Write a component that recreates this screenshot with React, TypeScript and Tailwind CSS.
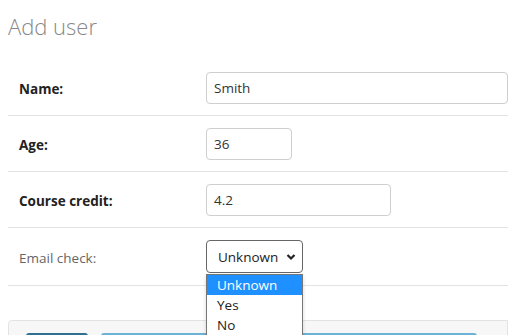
import React from "react";

const font = { fontFamily: '"Open Sans", "Noto Sans", sans-serif' };

function Row({ label, bold = true, children, last = false }: { label: string; bold?: boolean; children: React.ReactNode; last?: boolean }) {
  return (
    <div className={`flex items-center border-b border-[#e3e3e3] ${last ? "h-[58px]" : "h-[56px]"}`}>
      <div className={`w-[198px] pl-[11px] pt-[3px] text-[13.5px] ${bold ? "font-bold text-[#222]" : "text-[#666]"}`}>{label}</div>
      <div className="flex-1 relative">{children}</div>
    </div>
  );
}

function Input({ value, w }: { value: string; w: string }) {
  return (
    <div className={`${w} h-[32px] border border-[#cfcfcf] rounded-[4px] pl-[7px] pt-[2px] flex items-center text-[13.5px] text-[#333] bg-white`}>
      {value}
    </div>
  );
}

export default function App() {
  return (
    <div className="w-[508px] h-[335px] overflow-hidden bg-white pl-[8px]" style={font}>
      <div className="pt-[12px] h-[60px] text-[22px] font-light text-[#888] leading-[28px]">Add user</div>
      <Row label="Name:">
        <Input value="Smith" w="w-[302px]" />
      </Row>
      <Row label="Age:">
        <Input value="36" w="w-[86px]" />
      </Row>
      <Row label="Course credit:">
        <Input value="4.2" w="w-[185px]" />
      </Row>
      <Row label="Email check:" bold={false} last>
        <div className="w-[97px] h-[33px] border border-[#666] rounded-[4px] pl-[11px] pr-[6px] flex items-center justify-between text-[13.5px] text-[#222] bg-white">
          <span className="pt-[2px]">Unknown</span>
          <svg width="10" height="8" viewBox="0 0 10 8" className="mt-[1px]">
            <path d="M1.5 2 L5 5.5 L8.5 2" stroke="#222" strokeWidth="2.2" fill="none" />
          </svg>
        </div>
        <div className="absolute left-0 top-[33.5px] w-[97px] z-10 bg-white border border-[#767676] text-[13.5px] text-[#222] shadow-[0_2px_4px_rgba(0,0,0,0.15)]">
          <div className="h-[20px] leading-[21px] pl-[10px] bg-[#1e90ff] text-white">Unknown</div>
          <div className="h-[20px] leading-[21px] pl-[10px]">Yes</div>
          <div className="h-[20px] leading-[21px] pl-[10px]">No</div>
        </div>
      </Row>
      <div className="mt-[34px] h-[40px] border border-[#e3e3e3] rounded-tl-[4px] bg-[#f7f7f7] pt-[12px] pl-[17px] flex gap-[13px]">
        <div className="w-[62px] h-[30px] bg-[#2f6f8f] rounded-[3px]" />
        <div className="w-[376px] h-[30px] bg-[#6cb2d4] rounded-[3px]" />
      </div>
    </div>
  );
}
